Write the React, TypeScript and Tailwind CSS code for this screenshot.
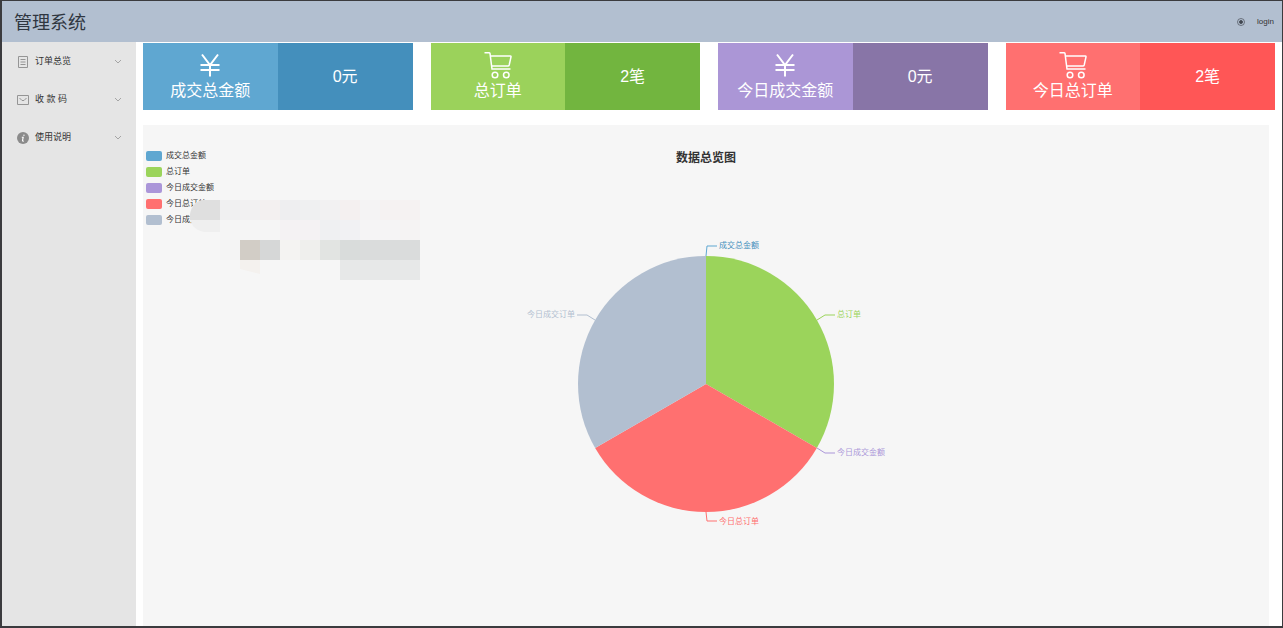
import { useState } from 'react'

const menus = [
  { name: '订单总览', icon: 'list' },
  { name: '收 款 码', icon: 'mail' },
  { name: '使用说明', icon: 'info' },
]

const cards = [
  { name: '成交总金额', value: '0元', icon: 'yen', left: 'bg-[#5fa7d1]', right: 'bg-[#448fbc]' },
  { name: '总订单', value: '2笔', icon: 'cart', left: 'bg-[#9bd25b]', right: 'bg-[#72b53f]' },
  { name: '今日成交金额', value: '0元', icon: 'yen', left: 'bg-[#ab96d6]', right: 'bg-[#8875a7]' },
  { name: '今日总订单', value: '2笔', icon: 'cart', left: 'bg-[#ff7070]', right: 'bg-[#ff5656]' },
]

const legend = [
  { name: '成交总金额', color: 'bg-[#5fa7d1]' },
  { name: '总订单', color: 'bg-[#9bd45b]' },
  { name: '今日成交金额', color: 'bg-[#ab96d9]' },
  { name: '今日总订单', color: 'bg-[#ff7070]' },
  { name: '今日成交订单', color: 'bg-[#b2bfd0]' },
]

// x, y, width, height, fill
const tiles: [number, number, number, number, string][] = [
  [30, 0, 20, 20, '#f0f0f1'],
  [50, 0, 20, 20, '#f2f1f2'],
  [70, 0, 20, 20, '#f3f0f0'],
  [90, 0, 20, 20, '#eeeef0'],
  [110, 0, 20, 20, '#eff0f1'],
  [130, 0, 20, 20, '#f2f1f2'],
  [150, 0, 20, 20, '#f4f0f0'],
  [170, 0, 20, 20, '#f4f3f4'],
  [190, 0, 40, 20, '#f5f2f2'],
  [30, 20, 60, 20, '#f5f5f5'],
  [90, 20, 40, 20, '#f4f2f3'],
  [130, 20, 20, 20, '#eff0f2'],
  [150, 20, 20, 20, '#f1f1f3'],
  [170, 20, 40, 20, '#f5f4f5'],
  [210, 20, 20, 20, '#f5f3f3'],
  [30, 40, 20, 20, '#f4f4f4'],
  [50, 40, 20, 20, '#d2cdc6'],
  [70, 40, 20, 20, '#d6d7d7'],
  [90, 40, 20, 20, '#f4f3f2'],
  [110, 40, 20, 20, '#efefed'],
  [130, 40, 20, 20, '#e2e4e2'],
  [150, 40, 20, 20, '#d9dcdb'],
  [170, 40, 60, 20, '#dadcdc'],
  [150, 60, 80, 20, '#e7e8e8'],
]

function MenuIcon({ name }: { name: string }) {
  if (name === 'info') {
    return (
      <svg className="w-3 h-3" viewBox="0 0 12 12">
        <circle cx="6" cy="6" r="6" fill="#8b8b8b" />
        <path d="M7.1 2.6 6.8 3.8M4.8 5.2h1.4L5.5 8.6q0 .8 1.2.3" stroke="#fff" strokeWidth="1.1" fill="none" />
      </svg>
    )
  }
  return (
    <svg className="w-3 h-3" viewBox="0 0 12 12" fill="none" stroke="#959595">
      {name === 'list' ? (
        <path d="M1.5.5h9v11h-9zM3.5 3.5h5M3.5 6h5M3.5 8.5h5" />
      ) : (
        <path d="M.5 1.5h11v9H.5zM2.5 4 5 6.5h2L9.5 4" />
      )}
    </svg>
  )
}

function CardIcon({ name }: { name: string }) {
  if (name === 'yen') {
    return (
      <svg className="w-7 h-7" viewBox="0 0 28 28" fill="none" stroke="#fff" strokeWidth="2">
        <path d="M6 3.5 14 14l8-10.5M4.5 14h19M4.5 19h19M14 14v11.5" />
      </svg>
    )
  }
  return (
    <svg className="w-7 h-7" viewBox="0 0 28 28" fill="none" stroke="#fff" strokeWidth="1.5">
      <path d="M.5 1.7H5q.8 0 1 .8L8 18h18.5M6.5 5h20q.6 0 .5.8L25.2 14q-.3 1-1.3 1H7.5" />
      <circle cx="11" cy="24" r="2.8" />
      <circle cx="22.3" cy="24" r="2.8" />
    </svg>
  )
}

function PieChart() {
  return (
    <svg className="w-[400px] h-[300px]" viewBox="-200 -150 400 300" fontSize="8">
      <path d="M0 0V-128A128 128 0 0 1 110.85 64z" fill="#9bd45b" />
      <path d="M0 0 110.85 64A128 128 0 0 1-110.85 64z" fill="#ff7070" />
      <path d="M0 0-110.85 64A128 128 0 0 1 0-128z" fill="#b2bfd0" />
      <g fill="none" strokeWidth="1">
        <path d="M0-128 1-138H11" stroke="#5fa7d1" />
        <path d="M111-64 119-69H129" stroke="#9bd45b" />
        <path d="M111 64 119 69H129" stroke="#ab96d9" />
        <path d="M0 128 1 137H11" stroke="#ff7070" />
        <path d="M-111-64-119-69H-129" stroke="#b2bfd0" />
      </g>
      <text x="13" y="-136" fill="#448fbc">成交总金额</text>
      <text x="131" y="-67" fill="#9bd45b">总订单</text>
      <text x="131" y="71" fill="#ab96d9">今日成交金额</text>
      <text x="13" y="140" fill="#ff7070">今日总订单</text>
      <text x="-131" y="-67" fill="#b2bfd0" textAnchor="end">今日成交订单</text>
    </svg>
  )
}

export default function App() {
  const [open, setOpen] = useState('')

  return (
    <div className="min-h-screen flex flex-col border-t border-r border-l-2 border-b-2 border-[#3b3b3e] bg-white font-['Liberation_Sans','Noto_Sans_CJK_SC',sans-serif] text-[#333]">
      <header className="flex items-center justify-between h-[41px] pl-3 pr-2 bg-[#b2bfd0]">
        <h1 className="pt-1 text-[18px] text-[#2f3640]">管理系统</h1>
        <div className="flex items-center gap-3 pt-px text-[8px]">
          <button type="button" aria-label="theme">
            <svg className="w-2 h-2" viewBox="0 0 8 8" fill="none" stroke="#4a505a">
              <circle cx="4" cy="4" r="3.5" strokeWidth=".7" />
              <circle cx="4" cy="4" r="1.5" fill="#3d434d" />
            </svg>
          </button>
          <a href="#">login</a>
        </div>
      </header>

      <div className="flex flex-1">
        <aside className="w-[134px] shrink-0 pt-px bg-[#e5e5e5]">
          <ul>
            {menus.map((menu) => (
              <li key={menu.name}>
                <button
                  type="button"
                  className="flex items-center w-full h-[38px] pl-[15px] pr-[14px] text-[9px]"
                  aria-expanded={open === menu.name}
                  onClick={() => setOpen(open === menu.name ? '' : menu.name)}
                >
                  <MenuIcon name={menu.icon} />
                  <span className="flex-1 pl-[6px] text-left whitespace-pre">{menu.name}</span>
                  <svg className="w-2 h-2" viewBox="0 0 8 8" fill="none" stroke="#a5a5a5">
                    <path d="M1 2l3 3 3-3" />
                  </svg>
                </button>
              </li>
            ))}
          </ul>
        </aside>

        <main className="flex flex-col flex-1 pt-px pl-[7px] pr-[7px]">
          <div className="grid grid-cols-4 gap-[18px]">
            {cards.map((card) => (
              <div key={card.name} className="flex h-[67px] text-base leading-6 text-white">
                <div className={`flex flex-1 flex-col items-center justify-center ${card.left}`}>
                  <CardIcon name={card.icon} />
                  <span>{card.name}</span>
                </div>
                <div className={`flex flex-1 items-center justify-center ${card.right}`}>{card.value}</div>
              </div>
            ))}
          </div>

          <section className="relative grid grid-cols-[1fr_400px_1fr] flex-1 mt-[15px] mr-[6px] pt-[23px] bg-[#f6f6f6]">
            <ul className="pl-[3px] text-[8px] leading-4">
              {legend.map((item) => (
                <li key={item.name} className="flex items-center gap-1">
                  <span className={`w-4 h-[10px] rounded-xs ${item.color}`} />
                  {item.name}
                </li>
              ))}
            </ul>
            <div className="flex flex-col items-center">
              <h2 className="mb-[66px] text-xs leading-5 font-bold">数据总览图</h2>
              <PieChart />
            </div>
            {/* pixelated area over the end of the legend */}
            <svg className="absolute left-[47px] top-[75px] w-[230px] h-20" viewBox="0 0 230 80">
              <path d="M30 0H12Q0 3 0 16T14 32H30z" fill="#efefef" />
              <path d="M30 0H12Q2 3 0 14V20H30z" fill="#dfdfdf" />
              <path d="M50 60h20v14l-20-5z" fill="#f4f1ee" />
              {tiles.map(([x, y, w, h, fill]) => (
                <rect key={`${x}-${y}`} x={x} y={y} width={w} height={h} fill={fill} />
              ))}
            </svg>
          </section>
        </main>
      </div>
    </div>
  )
}
